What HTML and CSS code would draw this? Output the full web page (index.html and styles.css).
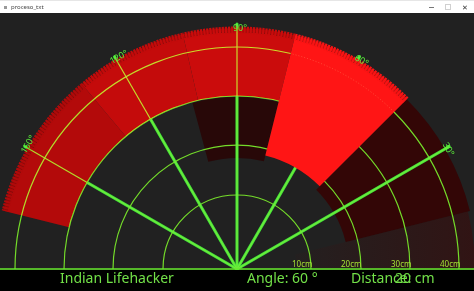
FILE: index.html
```html
<!DOCTYPE html>
<html lang="en">
<head>
  <meta charset="UTF-8">
  <meta name="viewport" content="width=device-width, initial-scale=1.0">
  <title>proceso_txt</title>
  <link rel="stylesheet" href="styles.css">
</head>
<body>
  <div class="window">
    <!-- Window title bar -->
    <div class="titlebar">
      <span class="app-icon"></span>
      <span class="title">proceso_txt</span>
      <div class="controls">
        <span class="ctl ctl-min"></span>
        <span class="ctl ctl-max"></span>
        <span class="ctl ctl-close">&#x2715;</span>
      </div>
    </div>

    <!-- Radar sketch (drawn canvas) -->
    <svg class="sketch" width="474" height="278" viewBox="0 0 474 278">
      <defs>
        <linearGradient id="fade" x1="295" y1="0" x2="475" y2="0" gradientUnits="userSpaceOnUse">
          <stop offset="0" stop-color="#242020"/>
          <stop offset="1" stop-color="#311414"/>
        </linearGradient>
      </defs>

      <!-- old, faded traces -->
      <path d="M475 256 A238 238 0 0 0 467.9 198.4 L295.2 241.5 A60 60 0 0 1 297 256 Z" fill="url(#fade)"/>
      <path class="trace-dark" d="M469.9 197.9 A240 240 0 0 0 406.7 86.3 L316.2 176.8 A112 112 0 0 1 345.7 228.9 Z"/>
      <path class="trace-dim" d="M278.6 89.1 A172 172 0 0 0 192.5 89.9 L208.3 148.8 A111 111 0 0 1 263.9 148.3 Z"/>

      <!-- thick spokes -->
      <g class="spokes">
        <line x1="237" y1="256" x2="449.2" y2="133.5"/>
        <line x1="237" y1="256" x2="359.5" y2="43.8"/>
        <line x1="237" y1="256" x2="237" y2="11"/>
        <line x1="237" y1="256" x2="114.5" y2="43.8"/>
        <line x1="237" y1="256" x2="24.8" y2="133.5"/>
      </g>

      <!-- recent traces -->
      <path class="band-a" d="M84.7 74.5 A237 237 0 0 0 7.0 198.7 L69.1 214.2 A173 173 0 0 1 125.8 123.5 Z"/>
      <path class="band-b" d="M183.7 25.1 A237 237 0 0 0 84.7 74.5 L125.8 123.5 A173 173 0 0 1 198.1 87.4 Z"/>
      <path class="band-c" d="M294.3 26.0 A237 237 0 0 0 183.7 25.1 L198.1 87.4 A173 173 0 0 1 278.9 88.1 Z"/>
      <path class="rim band-a-rim" d="M83.4 72.9 A239 239 0 0 0 5.1 198.2"/>
      <path class="rim band-b-rim" d="M183.2 23.1 A239 239 0 0 0 83.4 72.9"/>
      <path class="rim band-c-rim" d="M294.8 24.1 A239 239 0 0 0 183.2 23.1"/>
      <path class="teeth band-a-stroke" d="M83.4 72.9 A239 239 0 0 0 5.1 198.2"/>
      <path class="teeth band-b-stroke" d="M183.2 23.1 A239 239 0 0 0 83.4 72.9"/>
      <path class="teeth band-c-stroke" d="M294.8 24.1 A239 239 0 0 0 183.2 23.1"/>

      <!-- thin grid -->
      <g class="grid">
        <path d="M163 256 A74 74 0 0 1 311 256"/>
        <path d="M113 256 A124 124 0 0 1 361 256"/>
        <path d="M64 256 A173 173 0 0 1 410 256"/>
        <path d="M15 256 A222 222 0 0 1 459 256"/>
        <line x1="237" y1="256" x2="449.2" y2="133.5"/>
        <line x1="237" y1="256" x2="359.5" y2="43.8"/>
        <line x1="237" y1="256" x2="237" y2="11"/>
        <line x1="237" y1="256" x2="114.5" y2="43.8"/>
        <line x1="237" y1="256" x2="24.8" y2="133.5"/>
      </g>

      <!-- current trace -->
      <path class="band-hot" d="M404.6 88.4 A237 237 0 0 0 294.3 26.0 L265.3 142.5 A117 117 0 0 1 319.7 173.3 Z"/>
      <path class="rim band-hot-rim" d="M406.0 87.0 A239 239 0 0 0 294.8 24.1"/>
      <path class="teeth band-hot-stroke" d="M406.0 87.0 A239 239 0 0 0 294.8 24.1"/>
      <path class="ghost" d="M394 99 A222 222 0 0 0 290.7 40.6"/>

      <!-- angle labels -->
      <g class="deg">
        <text x="449" y="136" transform="rotate(60 449 136)">30°</text>
        <text x="362" y="47" transform="rotate(30 362 47)">60°</text>
        <text x="240" y="14.5">90°</text>
        <text x="118.5" y="43.5" transform="rotate(-30 118.5 43.5)">120°</text>
        <text x="27.5" y="131" transform="rotate(-60 27.5 131)">150°</text>
      </g>

      <!-- distance labels -->
      <g class="range">
        <text x="292" y="254">10cm</text>
        <text x="341" y="254">20cm</text>
        <text x="391" y="254">30cm</text>
        <text x="440" y="254">40cm</text>
      </g>

      <line class="base" x1="0" y1="256" x2="474" y2="256"/>

      <!-- status bar -->
      <rect class="status-bg" x="0" y="257" width="474" height="21"/>
      <g class="hud">
        <text x="60" y="270">Indian Lifehacker</text>
        <text x="247" y="270">Angle: 60 °</text>
        <text x="351" y="270">Distance: </text>
        <text x="395" y="270">20 cm</text>
      </g>
    </svg>
  </div>
</body>
</html>
```

FILE: styles.css
```css
body {
  margin: 0;
  padding: 0;
  background: #212121;
  font-family: "Noto Sans", "Open Sans", sans-serif;
}

.window {
  width: 474px;
  height: 291px;
  display: flex;
  flex-direction: column;
  overflow: hidden;
}

.titlebar {
  height: 13px;
  background: #ffffff;
  border-top: 1px solid #e6e6e6;
  box-sizing: border-box;
  display: flex;
  align-items: center;
  padding-left: 4px;
  gap: 4px;
}

.app-icon {
  width: 3px;
  height: 3px;
  background: #9a9a9a;
}

.title {
  font-size: 6px;
  color: #444;
  line-height: 1;
}

.controls {
  margin-left: auto;
  display: flex;
  align-items: center;
  gap: 11px;
  padding-right: 6px;
}

.ctl {
  display: block;
}

.ctl-min {
  width: 5px;
  height: 1px;
  background: #777;
}

.ctl-max {
  width: 4px;
  height: 4px;
  border: 1px solid #d0d0d0;
}

.ctl-close {
  font-size: 7px;
  line-height: 1;
  color: #333;
}

.sketch {
  display: block;
}

.trace-dark {
  fill: #330606;
}

.trace-dim {
  fill: #280808;
}

.spokes line {
  stroke: #43e83a;
  stroke-width: 3;
  stroke-linecap: round;
}

.band-a {
  fill: #b30a0a;
}

.band-b {
  fill: #c40b0b;
}

.band-c {
  fill: #cb0c0c;
}

.band-hot {
  fill: #ff1515;
}

.rim {
  fill: none;
  stroke-width: 4;
}

.teeth {
  fill: none;
  stroke-width: 7;
  stroke-dasharray: 2.2 0.9;
}

.band-a-rim {
  stroke: #8e0808;
}

.band-b-rim {
  stroke: #9c0909;
}

.band-c-rim {
  stroke: #a00909;
}

.band-hot-rim {
  stroke: #c81010;
}

.band-a-stroke {
  stroke: #b00a0a;
}

.band-b-stroke {
  stroke: #c20b0b;
}

.band-c-stroke {
  stroke: #c80c0c;
}

.band-hot-stroke {
  stroke: #f81414;
}

.ghost {
  fill: none;
  stroke: #ff8a60;
  stroke-width: 1;
  stroke-dasharray: 1 2;
  opacity: 0.45;
}

.grid {
  mix-blend-mode: lighten;
}

.grid path,
.grid line {
  fill: none;
  stroke: #74dc2a;
  stroke-width: 1.2;
}

.deg text {
  font-size: 9px;
  fill: #5cf03a;
  text-anchor: middle;
  dominant-baseline: central;
}

.range text {
  font-size: 8px;
  fill: #a6e234;
}

.base {
  stroke: #66ea2c;
  stroke-width: 1.6;
}

.status-bg {
  fill: #000000;
}

.hud text {
  font-size: 14px;
  fill: #72e048;
}
```
